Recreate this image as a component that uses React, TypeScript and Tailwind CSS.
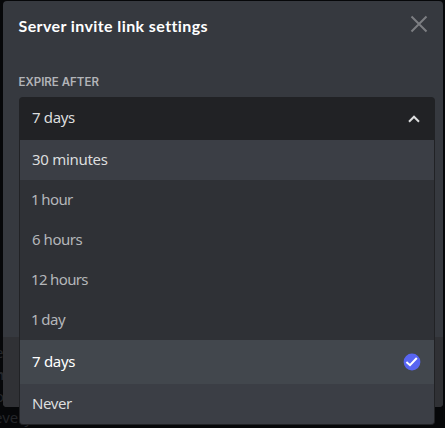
import React from "react";

type Option = { label: string; row: string; text: string; selected?: boolean };

const options: Option[] = [
  { label: "30 minutes", row: "h-10 bg-[#3b3e45] text-[#dcddde]", text: "tracking-[-0.3px]" },
  { label: "1 hour", row: "h-10 text-[#b4b6ba]", text: "-ml-px tracking-[-0.6px] [word-spacing:-1px]" },
  { label: "6 hours", row: "h-10 text-[#b4b6ba]", text: "tracking-[-0.45px]" },
  { label: "12 hours", row: "h-10 text-[#b4b6ba]", text: "-ml-px tracking-[-0.65px]" },
  { label: "1 day", row: "h-10 text-[#b4b6ba]", text: "-ml-px tracking-[-0.5px] [word-spacing:-1.2px]" },
  { label: "7 days", row: "h-11 bg-[#42474d] text-white", text: "tracking-[-0.3px]", selected: true },
  { label: "Never", row: "h-10 bg-[#3b3e45] text-[#dcddde]", text: "tracking-[-0.4px]" },
];

function CheckBadge() {
  return (
    <svg width="18" height="18" viewBox="0 0 18 18" className="mr-[13px]">
      <circle cx="9" cy="9" r="8.4" fill="#5865f2" />
      <path d="M3.4 9 7 12.2 13.8 5" fill="none" stroke="#fff" strokeWidth="2" />
    </svg>
  );
}

// Dimmed chat text that shows past the edges of the dialog.
function Backdrop() {
  return (
    <div className="absolute inset-0 flex flex-col justify-end overflow-hidden text-[15px] leading-[22px] text-[#24262a]">
      <div className="-ml-[5px] flex flex-col">
        <span>e</span>
        <span className="font-bold">n</span>
        <span>o</span>
      </div>
      <div className="-ml-[6px] flex h-[21px] items-start gap-[90px] pb-px">
        <span className="-mt-px">every</span>
        <span className="-mt-1">y</span>
      </div>
    </div>
  );
}

export default function App() {
  return (
    <div className="relative h-[428px] w-[445px] overflow-hidden bg-[#060709] pl-[3px] pt-px font-['Noto_Sans','Open_Sans',sans-serif]">
      <Backdrop />
      <section className="relative flex h-[406px] w-[440px] flex-col rounded-[4px] bg-[#36393f]">
        <header className="flex h-[75px] items-start justify-between pl-[15.5px] pr-[15px]">
          <h1 className="mt-[13px] whitespace-nowrap font-[family-name:Lato] text-[16px] font-bold leading-6 tracking-[0.4px] text-white">
            Server invite link settings
          </h1>
          <svg width="18" height="18" viewBox="0 0 18 18" className="mt-[14px]">
            <path d="M1.5 1.5 16.5 16.5M16.5 1.5 1.5 16.5" stroke="#7c7e82" strokeWidth="2" />
          </svg>
        </header>
        <div className="flex-1 px-4">
          <h2 className="-ml-[0.5px] h-[21px] whitespace-nowrap pt-px font-[family-name:Inter] text-[11.5px] font-semibold leading-[11px] text-[#b2b4b8]">
            EXPIRE AFTER
          </h2>
          <div className="relative">
            <div className="flex h-[43px] w-[416px] items-center justify-between rounded-t-[4px] bg-[#212225] pl-[13px] pr-[15px] text-[15px] text-[#dcddde]">
              <span className="pb-0.5 tracking-[-0.35px]">7 days</span>
              <svg width="12" height="8" viewBox="0 0 12 8">
                <path d="M1 6.7 6 1.7 11 6.7" fill="none" stroke="#dcddde" strokeWidth="2" />
              </svg>
            </div>
            <ul className="absolute left-0 top-full z-10 w-[416px] overflow-hidden rounded-b-[4px] border border-t-0 border-[#212225] bg-[#2f3136] text-[15px]">
              {options.map((o) => (
                <li key={o.label} className={"flex items-center justify-between pl-3 " + o.row}>
                  <span className={"pb-0.5 " + o.text}>{o.label}</span>
                  {o.selected && <CheckBadge />}
                </li>
              ))}
            </ul>
          </div>
        </div>
        <footer className="h-[70px] rounded-b-[4px] bg-[#303135]" />
      </section>
    </div>
  );
}
